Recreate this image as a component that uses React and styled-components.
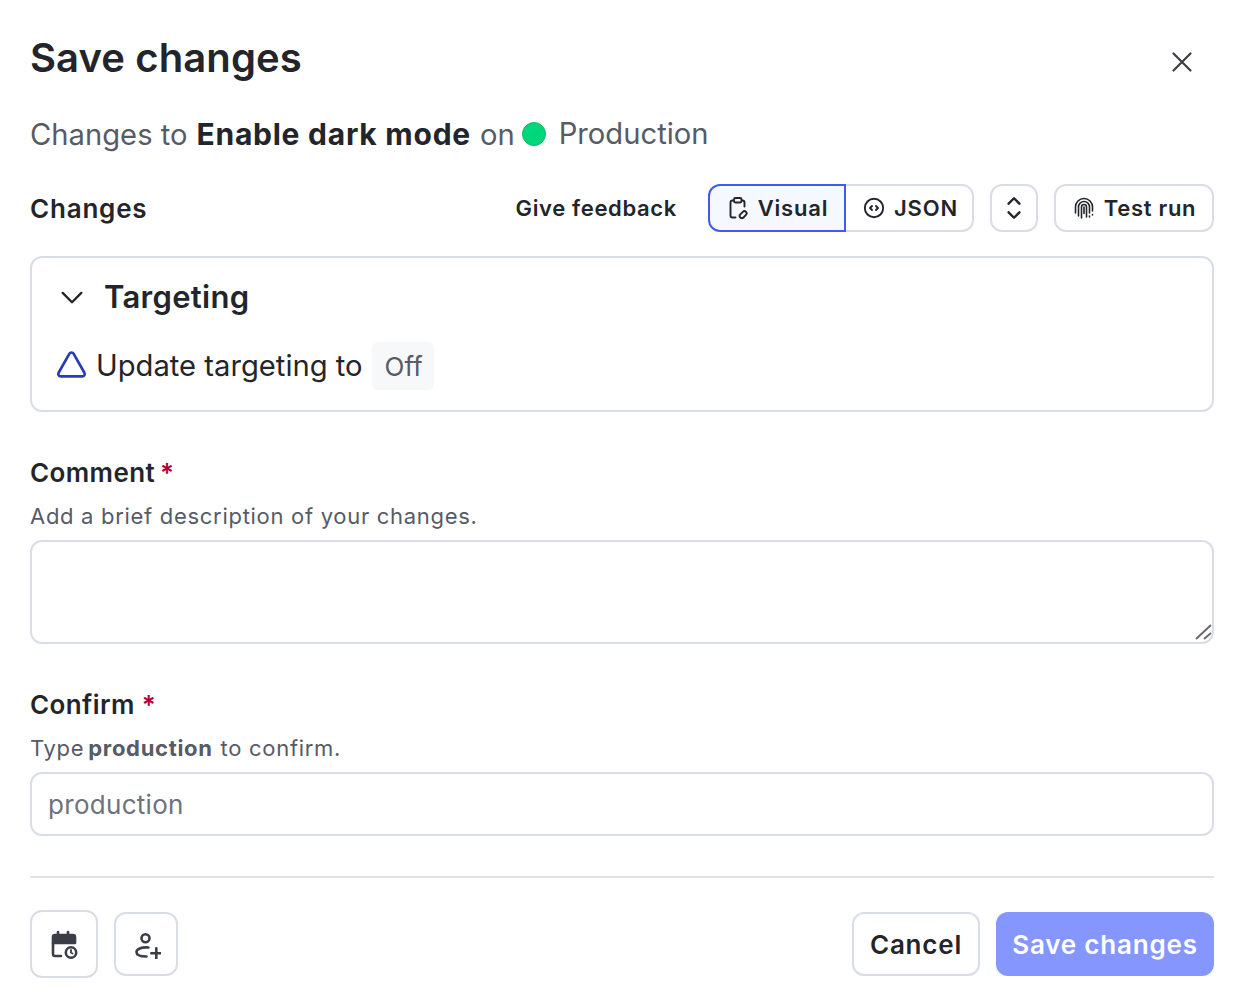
import React from "react";
import styled, { createGlobalStyle } from "styled-components";

const Global = createGlobalStyle`
  html, body { margin: 0; padding: 0; background: #fff; }
  body { font-family: Inter, "Liberation Sans", sans-serif; color: #23252b; }
  * { box-sizing: border-box; }
`;
const Page = styled.div`
  width: 1244px; height: 1008px; padding: 0 30px; display: flex; flex-direction: column;
`;
const Header = styled.header`
  height: 116px; display: flex; justify-content: space-between; align-items: flex-start;
`;
const Title = styled.h1`
  margin: 34px 0 0; font-size: 40px; line-height: 48px; font-weight: 600; letter-spacing: .1px;
`;
const CloseButton = styled.button`
  margin: 44px 14px 0 0; width: 36px; height: 36px; padding: 0; border: 0; background: none; color: #3b3e46;
  display: flex; align-items: center; justify-content: center;
`;
const Summary = styled.div`
  height: 36px; display: flex; align-items: center; font-size: 29.2px; color: #565b66; white-space: nowrap;
`;
const Strong = styled.strong`
  font-size: 30px; font-weight: 700; color: #23252b; margin: 0 9px 0 9px; letter-spacing: .75px;
`;
const Dot = styled.span`
  width: 24px; height: 24px; border-radius: 50%; background: #00d67a; border: 1px solid #12b56c; margin: 0 13px 0 7px;
`;
const Env = styled.span` margin-bottom: 2px; `;
const Toolbar = styled.div`
  height: 48px; margin-top: 32px; display: flex; align-items: center;
`;
const SectionTitle = styled.h2`
  margin: 0; flex: 1; font-size: 26px; font-weight: 600; letter-spacing: .8px;
`;
const Feedback = styled.span`
  font-size: 22px; font-weight: 600; letter-spacing: .65px; margin-right: 31px;
`;
const Segment = styled.div` display: flex; margin-right: 16px; `;
const SegmentButton = styled.button`
  height: 48px; display: flex; align-items: center; gap: 8px; font: 600 22px Inter, sans-serif; letter-spacing: .8px; color: #23252b;
  width: ${p => p.$w}px; justify-content: center; padding: ${p => p.$active ? 0 : "0 0 0 2px"};
  background: ${p => p.$active ? "#f5f8ff" : "#fff"};
  border: 2px solid ${p => p.$active ? "#405bf0" : "#d8dde6"};
  border-left-width: ${p => p.$active ? 2 : 0}px;
  border-radius: ${p => p.$active ? "12px 0 0 12px" : "0 12px 12px 0"};
`;
const OutlineButton = styled.button`
  height: 48px; width: ${p => p.$w}px; margin-left: ${p => p.$ml || 0}px; display: flex; align-items: center; justify-content: center; gap: 8px;
  font: 600 22px Inter, sans-serif; letter-spacing: .7px; color: #23252b; background: #fff; border: 2px solid #d8dde6; border-radius: 12px; padding: 0;
`;
const Card = styled.section`
  height: 156px; margin-top: 24px; border: 2px solid #d8dde6; border-radius: 12px; padding: 0 24px;
`;
const CardHead = styled.div`
  height: 78px; display: flex; align-items: center; gap: 18px; padding: 0 0 0 2px;
`;
const CardTitle = styled.h3`
  margin: 0 0 2px; font-size: 31px; font-weight: 600; letter-spacing: .3px;
`;
const UpdateRow = styled.div`
  height: 48px; margin-top: 6px; display: flex; align-items: center; font-size: 29.2px; white-space: nowrap;
`;
const UpdateText = styled.span` margin-bottom: 2px; `;
const Warn = styled.svg` margin: 0 8px 4px -1px; `;
const Tag = styled.span`
  height: 48px; width: 62px; margin-left: 9px; padding-left: 2px; background: #f7f8fa; border-radius: 6px; display: flex; align-items: center; justify-content: center; color: #565b66; font-size: 26px;
`;
const Field = styled.div` margin-top: ${p => p.$mt}px; display: flex; flex-direction: column; `;
const Label = styled.label`
  font-size: 26px; line-height: 34px; font-weight: 600; letter-spacing: .4px;
`;
const Star = styled.span` color: #b3003c; margin-left: ${p => p.$ml}px; `;
const Hint = styled.div`
  margin-top: 10px; height: 40px; font-size: 22px; line-height: 32px; color: #565b66; letter-spacing: .7px; white-space: nowrap;
  b { font-weight: 700; margin: 0 1px 0 -3px; }
`;
const AreaWrap = styled.div` position: relative; height: 104px; `;
const TextArea = styled.textarea`
  display: block; width: 100%; height: 104px; border: 2px solid #d8dde6; border-radius: 12px; outline: 0; background: #fff; margin: 0; resize: none;
`;
const Grip = styled.svg` position: absolute; right: 0; bottom: 0; pointer-events: none; `;
const Input = styled.input`
  width: 100%; height: 64px; border: 2px solid #d8dde6; border-radius: 12px; outline: 0; padding: 0 16px; font: 400 26px Inter, sans-serif; letter-spacing: .3px;
  &::placeholder { color: #6d727d; opacity: 1; }
`;
const Divider = styled.hr` margin: 40px 0 0; border: 0; border-top: 2px solid #dfe2e8; `;
const Footer = styled.footer`
  margin-top: 32px; display: flex; align-items: center; justify-content: space-between; 
`;
const Group = styled.div` display: flex; align-items: center; gap: ${p => p.$gap}px; `;
const IconButton = styled.button`
  width: ${p => p.$w}px; height: ${p => p.$h}px; border: 2px solid #d8dde6; border-radius: 12px; background: #fff; padding: 0; display: flex; align-items: center; justify-content: center; color: #3b3e46;
`;
const Cancel = styled.button`
  width: 128px; height: 64px; border: 2px solid #d8dde6; border-radius: 12px; background: #fff; font: 600 26px Inter, sans-serif; letter-spacing: .8px; color: #23252b; padding: 0;
`;
const Save = styled.button`
  width: 218px; height: 64px; border: 0; border-radius: 12px; background: #8597ff; font: 600 26px Inter, sans-serif; letter-spacing: .8px; color: #fff; padding: 0;
`;

const Icon = ({ s = 24, children, w = 2 }) => (
  <svg width={s} height={s} viewBox="0 0 24 24" fill="none" stroke="currentColor" strokeWidth={w} strokeLinecap="round" strokeLinejoin="round">{children}</svg>
);

export default function App() {
  return (
    <Page>
      <Global />
      <Header>
        <Title>Save changes</Title>
        <CloseButton aria-label="Close"><Icon s={24} w={2.2}><path d="M3.500 3.500l17 17M20.500 3.500l-17 17" /></Icon></CloseButton>
      </Header>
      <Summary>Changes to<Strong>Enable dark mode</Strong>on<Dot /><Env>Production</Env></Summary>
      <Toolbar>
        <SectionTitle>Changes</SectionTitle>
        <Feedback>Give feedback</Feedback>
        <Segment>
          <SegmentButton $active $w={138}>
            <Icon s={24} w={1.9}>
              <path d="M7.500 4.500H6.500A2 2 0 0 0 4.500 6.500v13a2 2 0 0 0 2 2H9.500" />
              <path d="M16 4.500h.5a2 2 0 0 1 2 2v4" />
              <rect x="8" y="2" width="7.500" height="4.500" rx="1.400" />
              <rect x="-4" y="-2" width="8" height="4.400" rx="2.200" transform="translate(17 18.500) rotate(-45)" />
            </Icon>
            Visual
          </SegmentButton>
          <SegmentButton $w={128}>
            <Icon s={24} w={1.9}><circle cx="12" cy="12" r="9.200" /><path d="M10 10l-2 2 2 2M14 10l2 2-2 2" /></Icon>
            JSON
          </SegmentButton>
        </Segment>
        <OutlineButton $w={48} aria-label="Expand"><Icon s={26} w={2.2}><path d="M7 8l5-5 5 5M7 16l5 5 5-5" /></Icon></OutlineButton>
        <OutlineButton $w={160} $ml={16}>
          <Icon s={24} w={1.6}>
            <path d="M3.500 17v-6a8.500 8.500 0 0 1 17 0v4" />
            <path d="M6.500 20v-9a5.500 5.500 0 0 1 11 0v6" />
            <path d="M9.500 22V11a2.500 2.500 0 0 1 5 0v10" />
            <path d="M12 11v6.500M20.500 18.500v.5M17.500 20v1" />
          </Icon>
          Test run
        </OutlineButton>
      </Toolbar>
      <Card>
        <CardHead>
          <Icon s={28} w={2}><path d="M4 8.500l8 8 8-8" /></Icon>
          <CardTitle>Targeting</CardTitle>
        </CardHead>
        <UpdateRow>
          <Warn width="33" height="29" viewBox="0 0 32 28" fill="none" stroke="#2a3bb5" strokeWidth="2.600" strokeLinejoin="round"><path d="M14 3.500a2.300 2.300 0 0 1 4 0L28.500 22a2.300 2.300 0 0 1-2 3.500h-21a2.300 2.300 0 0 1-2-3.500z" /></Warn>
          <UpdateText>Update targeting to</UpdateText><Tag>Off</Tag>
        </UpdateRow>
      </Card>
      <Field $mt={44}>
        <Label>Comment<Star $ml={5}>*</Star></Label>
        <Hint>Add a brief description of your changes.</Hint>
        <AreaWrap>
          <TextArea aria-label="Comment" />
          <Grip width="24" height="24" viewBox="0 0 24 24" stroke="#6a6a6a" strokeWidth="2"><path d="M6 19L21 5M14 19l7-6" /></Grip>
        </AreaWrap>
      </Field>
      <Field $mt={44}>
        <Label>Confirm<Star $ml={7}>*</Star></Label>
        <Hint>Type <b>production</b> to confirm.</Hint>
        <Input placeholder="production" />
      </Field>
      <Divider />
      <Footer>
        <Group $gap={16}>
          <IconButton $w={68} $h={68} aria-label="Schedule">
            <svg width="30" height="30" viewBox="1 0 30 30" fill="none" stroke="#3b3e46" strokeWidth="2.600" strokeLinecap="round" strokeLinejoin="round">
              <path d="M10 3v3M20 3v3" />
              <path d="M5 14V8a2 2 0 0 1 2-2h18a2 2 0 0 1 2 2v6z" fill="#3b3e46" />
              <path d="M5 14v11a2 2 0 0 0 2 2h6" />
              <circle cx="23" cy="23.500" r="5.200" />
              <path d="M23 21v2.500l1.500 1" strokeWidth="1.800" />
            </svg>
          </IconButton>
          <IconButton $w={64} $h={64} aria-label="Add reviewer">
            <svg width="30" height="30" viewBox="0 0 30 30" fill="none" stroke="#3b3e46" strokeWidth="2.600" strokeLinecap="round">
              <circle cx="14.500" cy="9.300" r="4" />
              <path d="M17.500 18.500C10 18 5.500 20 5.500 23c0 3.500 4.500 4.500 10 4.500" />
              <path d="M25.300 19.300v10M20.300 24.300h10" />
            </svg>
          </IconButton>
        </Group>
        <Group $gap={16}>
          <Cancel>Cancel</Cancel>
          <Save>Save changes</Save>
        </Group>
      </Footer>
    </Page>
  );
}
